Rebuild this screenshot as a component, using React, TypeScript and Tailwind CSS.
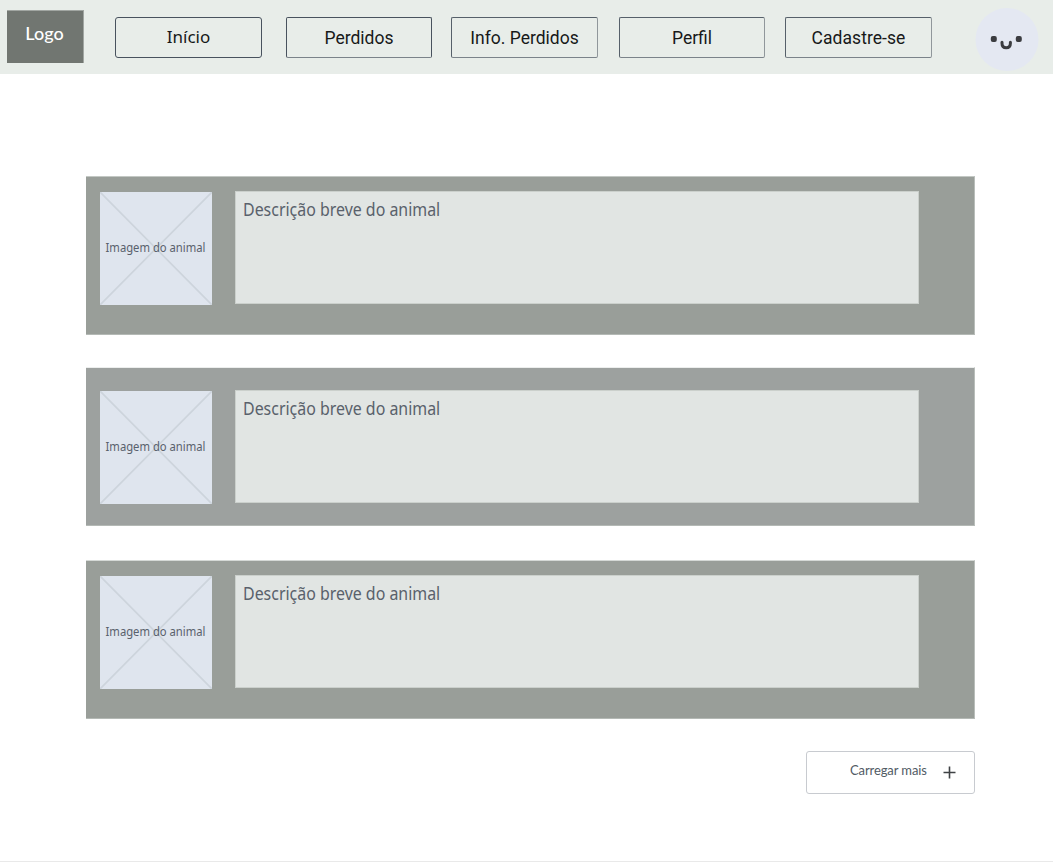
type NavItem = { label: string; box: string; text: string };

const navItems: NavItem[] = [
  { label: 'Início', box: 'ml-[31px] w-[147px] rounded-[3px] border-[#48525e]', text: "font-['Noto_Sans',sans-serif] text-[17px] pb-[2px]" },
  { label: 'Perdidos', box: 'ml-[24px] w-[146px] rounded-[2px] border-[#48525e] border-b-[#7b838a]', text: "font-['Roboto',sans-serif] text-[17.5px] pt-px" },
  { label: 'Info. Perdidos', box: 'ml-[19px] w-[147px] rounded-[2px] border-[#56606a] border-b-[#7b838a] border-r-[#90979b]', text: "font-['Roboto',sans-serif] text-[17.5px] pt-px" },
  { label: 'Perfil', box: 'ml-[21px] w-[146px] rounded-[2px] border-[#56606a] border-b-[#7b838a] border-r-[#90979b]', text: "font-['Roboto',sans-serif] text-[17.5px] pt-px" },
  { label: 'Cadastre-se', box: 'ml-[20px] w-[147px] rounded-[2px] border-[#56606a] border-b-[#7b838a] border-r-[#90979b]', text: "font-['Roboto',sans-serif] text-[17.5px] pt-[2px] tracking-[0.05px]" },
];

const panels = [
  'mt-[102px] pt-[14px] bg-[#999e99] border-t-[#c3c8c4]',
  'mt-[32px] pt-[22px] bg-[#9da19f] border-t-[#eceeed]',
  'mt-[34px] pt-[14px] bg-[#999e99] border-t-[#d5d9d6]',
];

function Face() {
  return (
    <svg className="ml-[43px] mt-[8px] h-[64px] w-[64px]" viewBox="0 0 64 64" role="img" aria-label="Perfil">
      <circle cx="32" cy="31.5" r="31.5" fill="#e4e8f2" />
      <rect x="15.8" y="28" width="6" height="6" rx="2" fill="#3b3c40" />
      <rect x="40.8" y="28" width="6" height="6" rx="2" fill="#3b3c40" />
      <path d="M27 34.3V35.3C27 38.7 29 39.8 31.2 39.8S35.4 38.7 35.4 35.3V34.3" fill="none" stroke="#3b3c40" strokeWidth="3" strokeLinecap="round" />
    </svg>
  );
}

function AnimalCard({ panel }: { panel: string }) {
  return (
    <article className={`flex h-[159px] w-[889px] border-t border-r border-b border-r-[#b9beba] border-b-[#b4b9b5] pl-[14px] ${panel}`}>
      <div className="mt-px grid h-[113px] w-[112px] shrink-0 bg-[#dfe5ee]">
        <svg className="col-start-1 row-start-1 h-[113px] w-[112px]" viewBox="0 0 112 113">
          <path d="M0 0L112 113M112 0L0 113" stroke="#cdd4dc" strokeWidth="1.7" />
        </svg>
        <span className="col-start-1 row-start-1 flex items-center justify-center whitespace-nowrap font-['Noto_Sans',sans-serif] text-[12.5px] text-[#59616c]">
          <span className="inline-block scale-x-[0.9]">Imagem do animal</span>
        </span>
      </div>
      <div className="ml-[23px] h-[113px] w-[684px] border border-[#cbd0cc] bg-[#e1e5e3] pl-[7px] pt-[5px]">
        <p className="w-max origin-left scale-x-[0.91] whitespace-nowrap font-['Noto_Sans',sans-serif] text-[17.5px] leading-[24px] text-[#59616b]">Descrição breve do animal</p>
      </div>
    </article>
  );
}

export default function App() {
  return (
    <div className="flex h-[862px] w-[1053px] flex-col overflow-hidden border-b border-[#e9e9e9] bg-white">
      <header className="flex h-[74px] shrink-0 items-start bg-[#e8ede9]">
        <div className="ml-[7px] mt-[10px] flex h-[53px] w-[77px] justify-center border-t border-r border-[#a1a6a2] bg-[#717671] pt-[10px] pr-px font-['Lato',sans-serif] text-[18px] font-medium leading-[24px] text-white">
          <span>Logo</span>
        </div>
        <nav className="mt-[17px] flex">
          {navItems.map((item) => (
            <a key={item.label} className={`flex h-[41px] items-center justify-center whitespace-nowrap border text-[#171919] ${item.box}`}>
              <span className={item.text}>{item.label}</span>
            </a>
          ))}
        </nav>
        <Face />
      </header>
      <main className="flex flex-col pl-[86px]">
        {panels.map((panel, i) => (
          <AnimalCard key={i} panel={panel} />
        ))}
        <button className="ml-[720px] mt-[32px] flex h-[43px] w-[169px] rounded-[3px] border border-[#c8cbd0] pl-[43px] font-['Lato',sans-serif] text-[13px] text-[#515b65]">
          <span className="mt-[8px] leading-[20px] tracking-[-0.1px]">Carregar mais</span>
          <svg className="ml-[16px] mt-[14px] h-[13px] w-[13px]" viewBox="0 0 13 13">
            <path d="M.5 6.5h12M6.5.5v12" stroke="#3f4245" strokeWidth="1.6" />
          </svg>
        </button>
      </main>
    </div>
  );
}
